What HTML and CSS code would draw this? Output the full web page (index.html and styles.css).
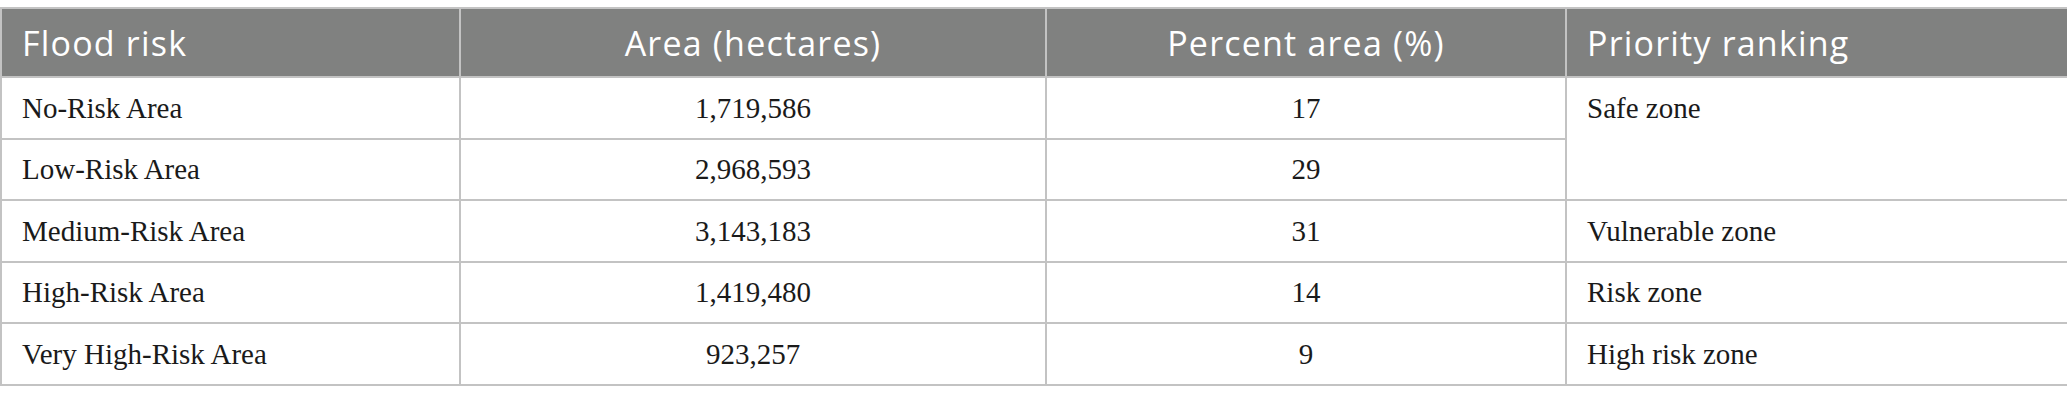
FILE: index.html
```html
<!DOCTYPE html>
<html lang="en">
<head>
<meta charset="utf-8">
<title>Flood risk table</title>
<link rel="stylesheet" href="styles.css">
</head>
<body>
<table class="risk-table">
  <colgroup>
    <col class="c1"><col class="c2"><col class="c3"><col class="c4">
  </colgroup>
  <thead>
    <tr>
      <th class="left">Flood risk</th>
      <th class="center">Area (hectares)</th>
      <th class="center">Percent area (%)</th>
      <th class="left">Priority ranking</th>
    </tr>
  </thead>
  <tbody>
    <tr>
      <td class="left">No-Risk Area</td>
      <td class="center">1,719,586</td>
      <td class="center">17</td>
      <td class="left" rowspan="2">Safe zone</td>
    </tr>
    <tr>
      <td class="left">Low-Risk Area</td>
      <td class="center">2,968,593</td>
      <td class="center">29</td>
    </tr>
    <tr>
      <td class="left">Medium-Risk Area</td>
      <td class="center">3,143,183</td>
      <td class="center">31</td>
      <td class="left">Vulnerable zone</td>
    </tr>
    <tr>
      <td class="left">High-Risk Area</td>
      <td class="center">1,419,480</td>
      <td class="center">14</td>
      <td class="left">Risk zone</td>
    </tr>
    <tr>
      <td class="left">Very High-Risk Area</td>
      <td class="center">923,257</td>
      <td class="center">9</td>
      <td class="left">High risk zone</td>
    </tr>
  </tbody>
</table>
</body>
</html>
```

FILE: styles.css
```css
html, body {
  margin: 0;
  padding: 0;
  background: #ffffff;
}

body {
  padding-top: 7px;
}

.risk-table {
  border-collapse: collapse;
  width: 2067px;
  table-layout: fixed;
}

.c1 { width: 459px; }
.c2 { width: 586px; }
.c3 { width: 520px; }
.c4 { width: 502px; }

.risk-table th,
.risk-table td {
  border: 2px solid #c3c3c3;
  vertical-align: top;
  padding-left: 20px;
  padding-right: 20px;
}

.risk-table th {
  background: #808180;
  color: #ffffff;
  font-family: "Open Sans", "Noto Sans", sans-serif;
  font-weight: 400;
  font-size: 34px;
  letter-spacing: 1.2px;
  line-height: 40px;
  padding-top: 14px;
  padding-bottom: 13px;
}

.risk-table td {
  color: #1a1a1a;
  font-family: "Liberation Serif", "DejaVu Serif", serif;
  font-size: 29px;
  line-height: 34.5px;
  padding-top: 12.5px;
  padding-bottom: 12.5px;
}

.left { text-align: left; }
.center { text-align: center; }
```
